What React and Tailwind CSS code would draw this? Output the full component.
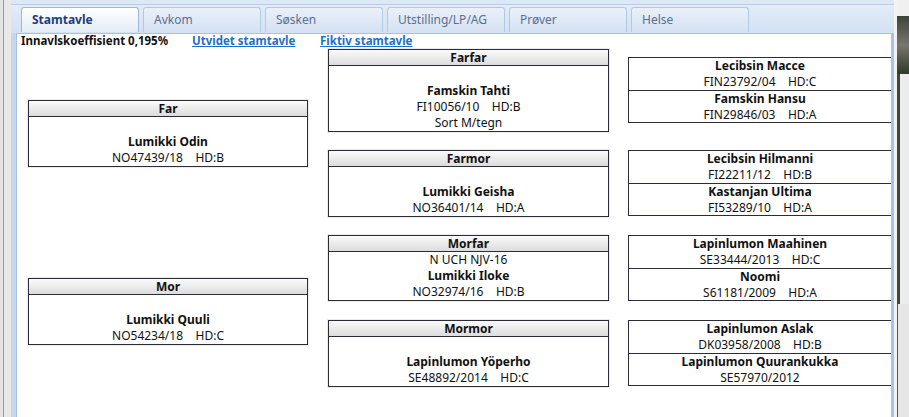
import React from 'react';

const tabs = ['Stamtavle', 'Avkom', 'Søsken', 'Utstilling/LP/AG', 'Prøver', 'Helse'];

// Box with grey header bar (parents, grandparents)
const HeadBox = ({ title, lines, h, mt, pad = 'pt-[17px]' }) => (
  <div className={`border border-[#2b2b3a] bg-white shadow-[0_0_0_1px_#ececec] ${h} ${mt} flex flex-col`}>
    <div className="h-[17px] border-b border-[#2b2b3a] bg-gradient-to-b from-[#fbfbfb] to-[#dcdcdc] flex items-center justify-center font-bold leading-none">
      {title}
    </div>
    <div className={`flex flex-col items-center ${pad}`}>
      {lines.map((l, i) => (
        <div key={i} className={`h-[16px] leading-[16px] whitespace-pre ${l.b ? 'font-bold' : ''}`}>{l.t}</div>
      ))}
    </div>
  </div>
);

// Pair of great-grandparents stacked in one frame
const PairBox = ({ mt, a, b }) => (
  <div className={`border-y border-l border-[#2b2b3a] bg-white h-[66px] ${mt} flex flex-col`}>
    {[a, b].map((p, i) => (
      <div key={i} className={`flex flex-col items-center ${i === 0 ? 'h-[33px] border-b border-[#2b2b3a]' : 'h-[31px]'}`}>
        <div className="h-[16px] leading-[16px] font-bold">{p.name}</div>
        <div className="h-[16px] leading-[16px] whitespace-pre">{p.reg}</div>
      </div>
    ))}
  </div>
);

export default function App() {
  return (
    <div className="w-[909px] h-[417px] bg-[#ebebeb] flex overflow-hidden text-[12px] text-[#111]" style={{ fontFamily: '"Noto Sans", "Open Sans", sans-serif' }}>
      {/* left window frame */}
      <div className="w-[11px] h-full flex">
        <div className="w-[3px] bg-[#e4e4e4]" />
        <div className="w-[1px] bg-[#9a9a9a]" />
        <div className="w-[7px] bg-[#e9e9e9]" />
      </div>

      {/* main panel */}
      <div className="w-[883px] h-full flex flex-col bg-[#c9daf0]">
        {/* tab strip */}
        <div className="h-[33px] bg-gradient-to-b from-[#e6eef9] to-[#d3e1f3] flex flex-col">
          <div className="h-[5px] border-b border-[#b9cde8] bg-[#dde8f6]" />
          <div className="flex gap-[4px] pl-[10px] pt-[2px] flex-1">
            {tabs.map((t, i) => (
              <div
                key={t}
                className={`w-[118px] h-[25px] rounded-t-[3px] border border-b-0 flex items-center pl-[10px] ${
                  i === 0
                    ? 'bg-gradient-to-b from-[#ffffff] to-[#e4edf8] border-[#9fb7d8] text-[#1d3d79] font-bold'
                    : 'bg-gradient-to-b from-[#e9f0fa] to-[#d5e2f3] border-[#b3c8e4] text-[#5c6f8f]'
                }`}
              >
                {t}
              </div>
            ))}
          </div>
        </div>

        {/* content */}
        <div className="flex-1 flex">
          <div className="w-[6px] bg-[#c6d8ef] border-r border-[#a9c0e0]" />
          <div className="flex-1 bg-white border-t border-[#a9c0e0] flex flex-col">
            <div className="h-[15px] flex items-end pl-[4px] text-[11.5px]">
              <span className="font-bold w-[171px]">Innavlskoeffisient 0,195%</span>
              <span className="font-bold text-[#1f6fc8] underline w-[128px]">Utvidet stamtavle</span>
              <span className="font-bold text-[#1f6fc8] underline">Fiktiv stamtavle</span>
            </div>

            <div className="flex pl-[11px]">
              {/* parents */}
              <div className="w-[280px] flex flex-col">
                <HeadBox mt="mt-[51px]" h="h-[67px]" title="Far" lines={[{ t: 'Lumikki Odin', b: true }, { t: 'NO47439/18    HD:B' }]} />
                <HeadBox mt="mt-[111px]" h="h-[67px]" title="Mor" lines={[{ t: 'Lumikki Quuli', b: true }, { t: 'NO54234/18    HD:C' }]} />
              </div>

              {/* grandparents */}
              <div className="w-[281px] ml-[20px] flex flex-col">
                <HeadBox mt="mt-[0px]" h="h-[83px]" title="Farfar" lines={[{ t: 'Famskin Tahti', b: true }, { t: 'FI10056/10    HD:B' }, { t: 'Sort M/tegn' }]} />
                <HeadBox mt="mt-[18px]" h="h-[67px]" title="Farmor" lines={[{ t: 'Lumikki Geisha', b: true }, { t: 'NO36401/14    HD:A' }]} />
                <HeadBox mt="mt-[18px]" h="h-[66px]" pad="pt-0" title="Morfar" lines={[{ t: 'N UCH NJV-16' }, { t: 'Lumikki Iloke', b: true }, { t: 'NO32974/16    HD:B' }]} />
                <HeadBox mt="mt-[19px]" h="h-[67px]" title="Mormor" lines={[{ t: 'Lapinlumon Yöperho', b: true }, { t: 'SE48892/2014    HD:C' }]} />
              </div>

              {/* great-grandparents */}
              <div className="flex-1 ml-[19px] flex flex-col">
                <PairBox mt="mt-[8px]" a={{ name: 'Lecibsin Macce', reg: 'FIN23792/04    HD:C' }} b={{ name: 'Famskin Hansu', reg: 'FIN29846/03    HD:A' }} />
                <PairBox mt="mt-[27px]" a={{ name: 'Lecibsin Hilmanni', reg: 'FI22211/12    HD:B' }} b={{ name: 'Kastanjan Ultima', reg: 'FI53289/10    HD:A' }} />
                <PairBox mt="mt-[19px]" a={{ name: 'Lapinlumon Maahinen', reg: 'SE33444/2013    HD:C' }} b={{ name: 'Noomi', reg: 'S61181/2009    HD:A' }} />
                <PairBox mt="mt-[19px]" a={{ name: 'Lapinlumon Aslak', reg: 'DK03958/2008    HD:B' }} b={{ name: 'Lapinlumon Quurankukka', reg: 'SE57970/2012' }} />
              </div>
            </div>
          </div>
          <div className="w-[3px] bg-[#a9c3e6]" />
        </div>
      </div>

      {/* right edge: window behind */}
      <div className="flex-1 h-full flex">
        <div className="w-[3px] bg-[#f2f2f2]" />
        <div className="flex-1 flex flex-col">
          <div className="h-[16px] bg-[#f0f0f0]" />
          <div className="h-[58px] bg-gradient-to-b from-[#3c4536] via-[#7a776c] to-[#2f3a2c]" />
          <div className="h-[230px] flex">
            <div className="w-[3px] bg-[#3c4a38]" />
            <div className="flex-1 bg-[#ececec]" />
          </div>
          <div className="flex-1 bg-[#e6e6e6] border-l border-[#555]" />
        </div>
      </div>
    </div>
  );
}
